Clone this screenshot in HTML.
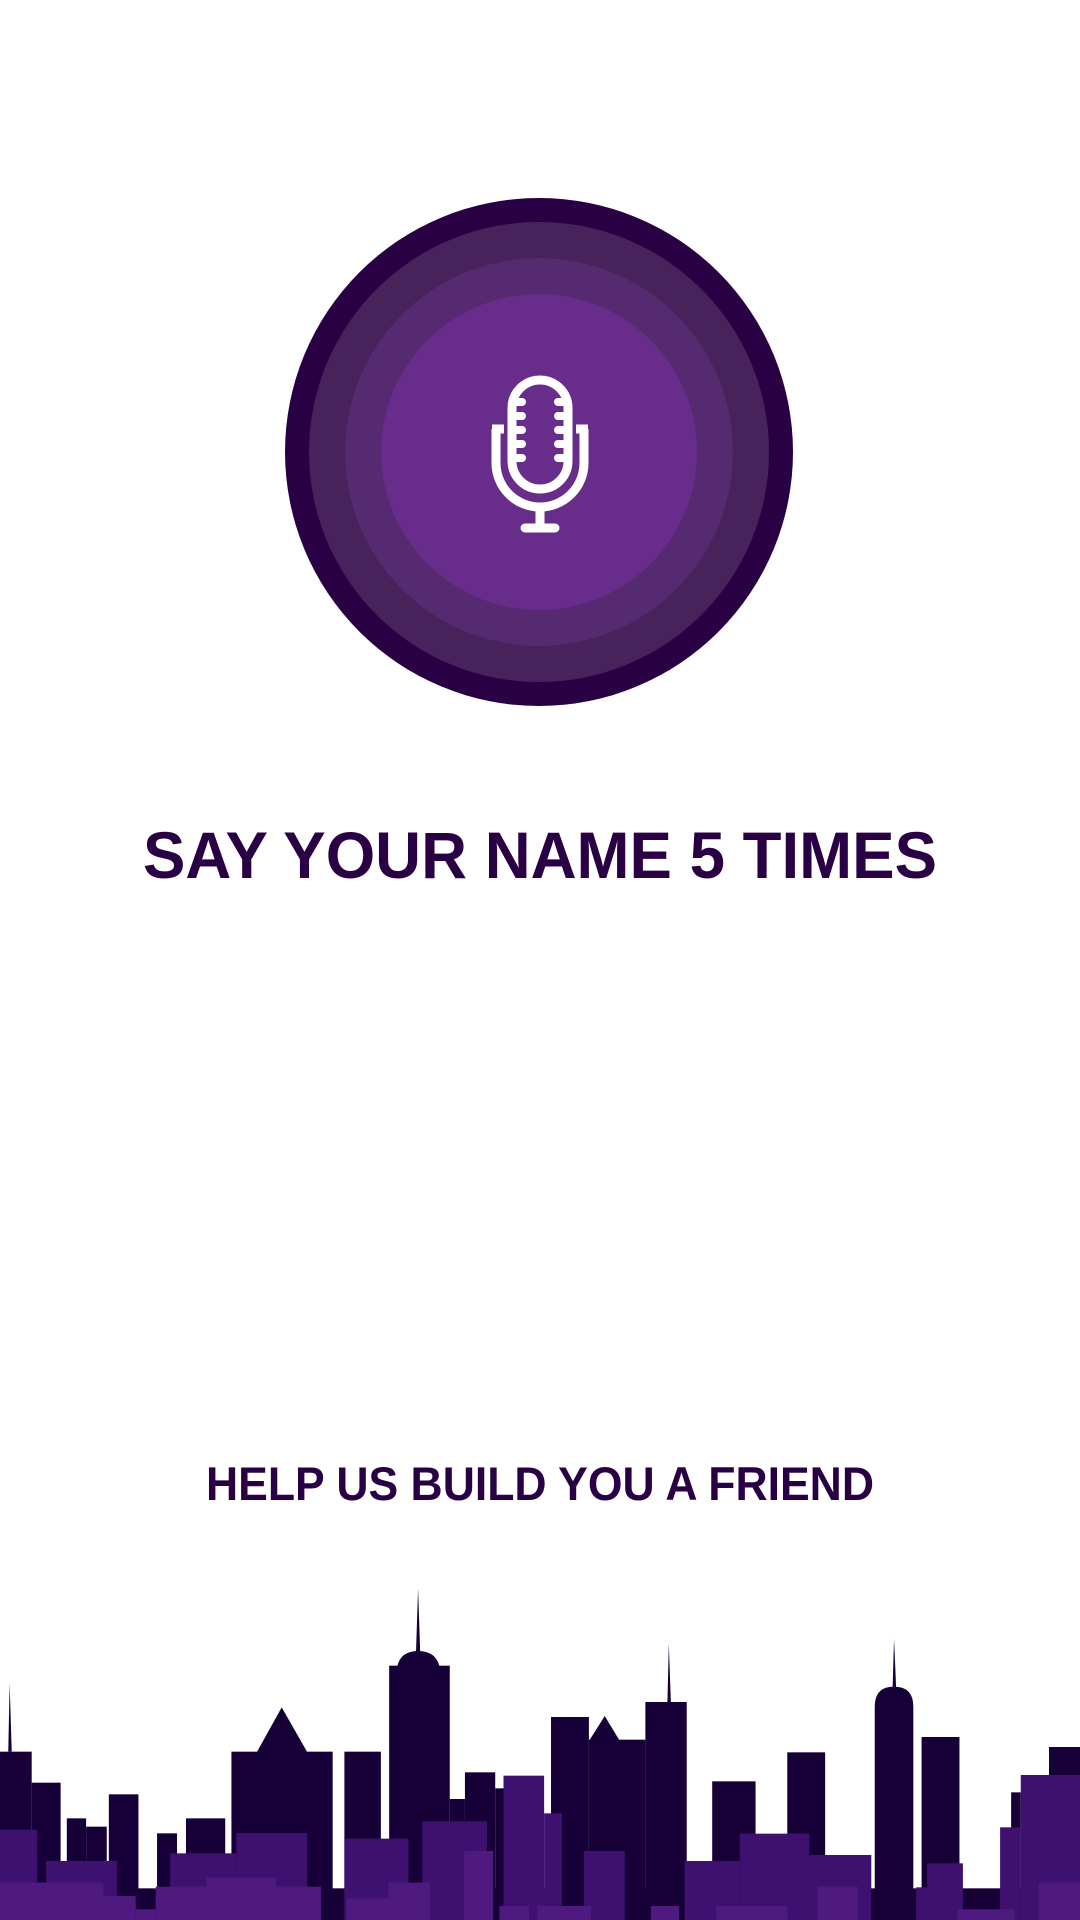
<!DOCTYPE html>
<html><head><meta charset="utf-8"><style>
html,body{margin:0;padding:0;background:#fff;width:1080px;height:1920px;overflow:hidden}
svg{display:block}
</style></head><body>
<svg width="1080" height="1920" viewBox="0 0 1080 1920" xmlns="http://www.w3.org/2000/svg">
<rect width="1080" height="1920" fill="#fff"/>
<circle cx="539" cy="452" r="254" fill="#2a0045"/>
<circle cx="539" cy="452" r="230" fill="#48225a"/>
<circle cx="539" cy="452" r="194" fill="#552a70"/>
<circle cx="539" cy="452" r="158" fill="#682c8a"/>
<g fill="none" stroke="#fff" stroke-width="9" stroke-linecap="round">
<path d="M512 408 A28 28 0 0 1 568 408 L568 461 A28 28 0 0 1 512 461 Z"/>
<path d="M496 429 L496 463 A44 44 0 0 0 584 463 L584 429" stroke-linecap="butt"/>
<path d="M492 429 L504 429 M576 429 L588 429" stroke-linecap="butt"/>
<path d="M540 507 L540 525 M525 528 L555 528"/>
<path d="M516 402 L522 402 M516 416 L522 416 M516 430 L522 430 M516 444 L522 444 M516 458 L522 458 M558 402 L564 402 M558 416 L564 416 M558 430 L564 430 M558 444 L564 444 M558 458 L564 458" stroke-width="8"/>
</g>
<text x="540" y="878" text-anchor="middle" font-family="Liberation Sans, sans-serif" font-weight="bold" font-size="66" fill="#2a0045" textLength="794" lengthAdjust="spacingAndGlyphs">SAY YOUR NAME 5 TIMES</text>
<text x="540" y="1500" text-anchor="middle" font-family="Liberation Sans, sans-serif" font-weight="bold" font-size="47" fill="#2a0045" textLength="668" lengthAdjust="spacingAndGlyphs">HELP US BUILD YOU A FRIEND</text>
<svg x="0" y="1580" width="1080" height="340" viewBox="0 0 1568 1020" preserveAspectRatio="none">
<g fill="#170038">
<polygon points="12,515 14,310 17,515"/>
<rect x="0" y="515" width="46" height="505"/>
<rect x="46" y="608" width="42" height="412"/>
<rect x="97" y="715" width="28" height="305"/>
<rect x="125" y="740" width="30" height="280"/>
<rect x="158" y="643" width="43" height="377"/>
<rect x="0" y="925" width="1568" height="95"/>
<rect x="228" y="760" width="29" height="260"/>
<rect x="270" y="715" width="57" height="305"/>
<rect x="336" y="515" width="147" height="505"/>
<polygon points="373,516 409,382 446,516"/>
<rect x="500" y="515" width="53" height="505"/>
<rect x="565" y="257" width="88" height="763"/>
<path d="M577,258 Q582,213 607,213 Q632,213 638,258 Z"/>
<polygon points="604,214 607,25 610,214"/>
<rect x="653" y="657" width="22" height="363"/>
<rect x="675" y="577" width="44" height="443"/>
<rect x="719" y="625" width="12" height="395"/>
<rect x="800" y="411" width="55" height="609"/>
<polygon points="856,480 878,408 899,480"/>
<rect x="855" y="479" width="82" height="541"/>
<rect x="937" y="366" width="60" height="654"/>
<polygon points="969,367 971,190 974,367"/>
<rect x="1034" y="604" width="63" height="416"/>
<rect x="1143" y="517" width="55" height="503"/>
<path d="M1270,380 Q1270,320 1298,320 Q1326,320 1326,380 L1326,1020 L1270,1020 Z"/>
<polygon points="1296,321 1298,175 1301,321"/>
<rect x="1338" y="471" width="55" height="549"/>
<rect x="1468" y="637" width="14" height="383"/>
<rect x="1523" y="501" width="45" height="519"/>
</g>
<g fill="#3e1170">
<rect x="0" y="749" width="54" height="271"/>
<rect x="67" y="843" width="103" height="177"/>
<rect x="247" y="820" width="96" height="200"/>
<rect x="343" y="759" width="103" height="261"/>
<rect x="500" y="776" width="93" height="244"/>
<rect x="613" y="724" width="94" height="296"/>
<rect x="731" y="587" width="59" height="433"/>
<rect x="790" y="700" width="26" height="320"/>
<rect x="848" y="813" width="59" height="207"/>
<rect x="994" y="843" width="80" height="177"/>
<rect x="1074" y="761" width="101" height="259"/>
<rect x="1175" y="825" width="90" height="195"/>
<rect x="1330" y="922" width="16" height="98"/>
<rect x="1346" y="850" width="52" height="170"/>
<rect x="1452" y="742" width="30" height="278"/>
<rect x="1482" y="585" width="86" height="435"/>
</g>
<g fill="#4f1a80">
<rect x="0" y="908" width="150" height="112"/>
<rect x="150" y="948" width="47" height="72"/>
<rect x="197" y="988" width="29" height="32"/>
<rect x="226" y="920" width="74" height="100"/>
<rect x="300" y="893" width="101" height="127"/>
<rect x="401" y="920" width="65" height="100"/>
<rect x="503" y="956" width="61" height="64"/>
<rect x="564" y="908" width="60" height="112"/>
<rect x="674" y="813" width="42" height="207"/>
<rect x="725" y="978" width="43" height="42"/>
<rect x="780" y="978" width="78" height="42"/>
<rect x="945" y="978" width="41" height="42"/>
<rect x="1040" y="978" width="103" height="42"/>
<rect x="1187" y="920" width="58" height="100"/>
<rect x="1390" y="988" width="83" height="32"/>
<rect x="1508" y="908" width="60" height="112"/>
</g>
</svg>
</svg>
</body></html>
